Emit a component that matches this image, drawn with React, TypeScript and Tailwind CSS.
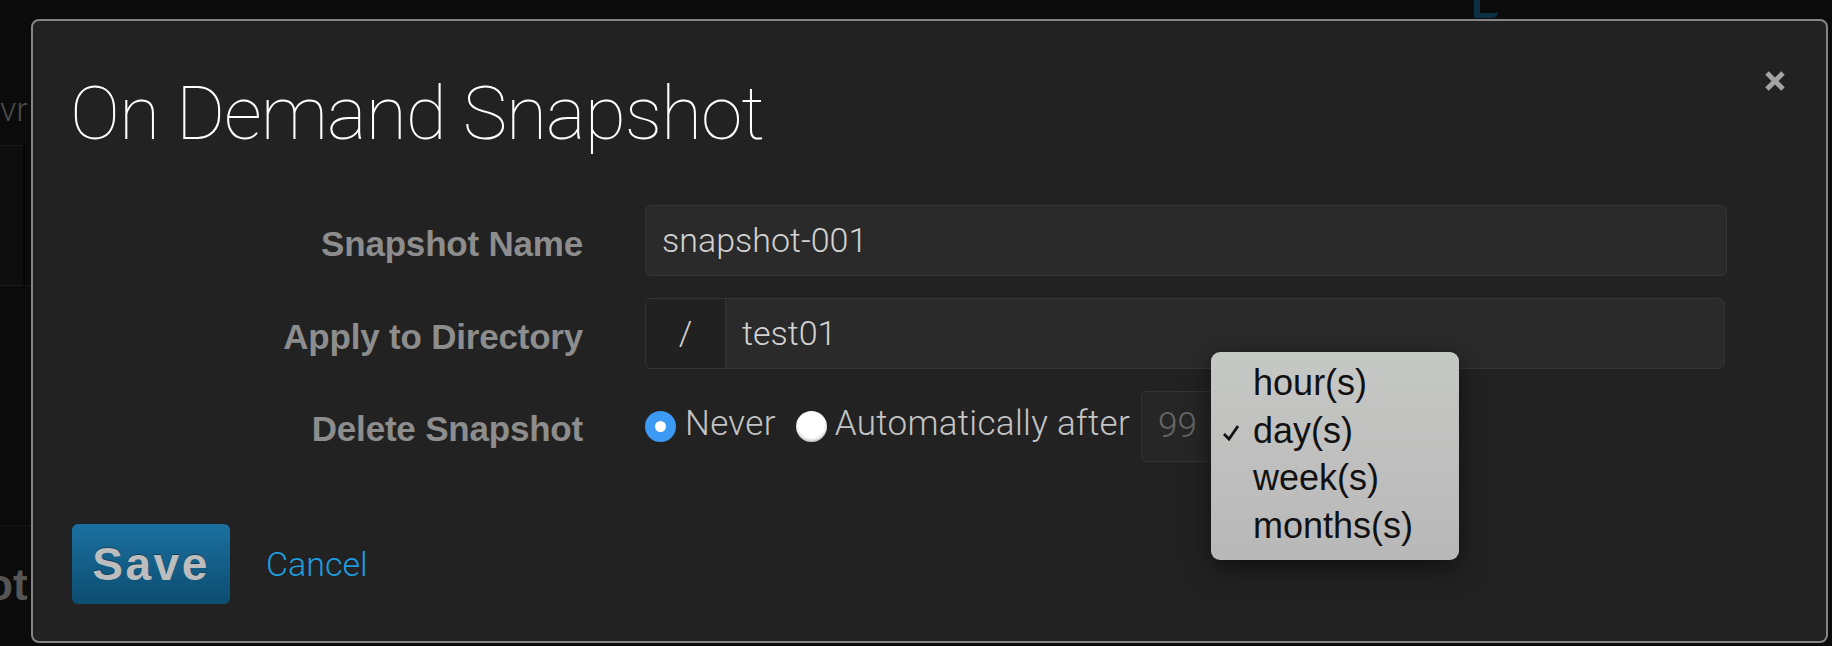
import { useState } from 'react';

const units = ['hour(s)', 'day(s)', 'week(s)', 'months(s)'];

function Radio({ checked }: { checked: boolean }) {
  return checked ? (
    <span className="w-[31px] h-[31px] rounded-full bg-[#3c9af5] flex items-center justify-center shrink-0">
      <span className="block w-[11px] h-[11px] rounded-full bg-white" />
    </span>
  ) : (
    <span className="block w-[31px] h-[31px] rounded-full bg-white shadow-[inset_0_-2px_3px_rgba(0,0,0,0.25)] shrink-0" />
  );
}

export default function App() {
  const [mode] = useState<'never' | 'auto'>('never');
  const [unit] = useState('day(s)');

  return (
    <div className="relative w-[1832px] h-[646px] bg-[#0b0b0b] overflow-hidden font-['Liberation_Sans',Arial,sans-serif]">
      {/* page behind the overlay */}
      <div className="w-[31px] flex flex-col">
        <div className="h-[96px]" />
        <div className="text-[34px] leading-[26px] font-['Roboto',sans-serif] font-light text-[#4a4a4a] whitespace-nowrap overflow-hidden">
          vr
        </div>
        <div className="h-[23px]" />
        <div className="h-[140px] border-t border-[#1a1a1a] border-r-2 border-r-[#050505] bg-[#0e0e0e] w-[25px]" />
        <div className="h-[40px] border-t border-[#1a1a1a]" />
        <div className="h-[200px]" />
        <div className="border-t border-[#161616] h-[40px]" />
        <div className="text-[44px] font-bold text-[#555] leading-[40px] -ml-[14px] whitespace-nowrap">ot</div>
      </div>
      <div className="absolute left-[1474px] top-0 w-[24px] h-[18px] rounded-br-md border-l-[6px] border-b-[5px] border-[#0d2f44]" />

      {/* modal */}
      <div className="absolute left-[31px] top-[19px] w-[1797px] h-[624px] rounded-lg border-2 border-[#858585] bg-[#222222] flex flex-col">
        <div className="flex items-start justify-between pl-[37px] pr-[40px] pt-[52px]">
          <h1 className="font-['Roboto',sans-serif] font-thin text-[75px] leading-[80px] text-white tracking-[-1px]">
            On Demand Snapshot
          </h1>
          <button className="mt-[-3px] w-[22px] h-[22px] text-[#a3a3a3]">
            <svg viewBox="0 0 22 22" className="w-[22px] h-[22px]">
              <path d="M3 3 L19 19 M19 3 L3 19" stroke="currentColor" strokeWidth="5" strokeLinecap="butt" />
            </svg>
          </button>
        </div>

        <div className="mt-[52px] grid grid-cols-[550px_1082px] gap-x-[62px] gap-y-[22px]">
          <label className="h-[71px] pt-[8px] flex items-center justify-end text-[35px] font-bold text-[#8d8d8d] tracking-[-0.2px]">
            Snapshot Name
          </label>
          <div className="h-[71px] rounded-md border border-[#353535] bg-[#2a2a2a] flex items-center px-[16px] font-['Roboto',sans-serif] font-light text-[34px] text-[#d2d2d2]">
            snapshot-001
          </div>

          <label className="h-[71px] pt-[8px] flex items-center justify-end text-[35px] font-bold text-[#8d8d8d] tracking-[-0.2px]">
            Apply to Directory
          </label>
          <div className="h-[71px] w-[1080px] rounded-md border border-[#353535] bg-[#2a2a2a] flex overflow-hidden font-['Roboto',sans-serif] font-light text-[34px] text-[#d2d2d2]">
            <span className="w-[80px] shrink-0 bg-[#212121] border-r border-[#353535] flex items-center justify-center">/</span>
            <span className="flex items-center px-[16px]">test01</span>
          </div>

          <label className="h-[71px] pt-[6px] flex items-center justify-end text-[35px] font-bold text-[#8d8d8d] tracking-[-0.2px]">
            Delete Snapshot
          </label>
          <div className="h-[71px] flex items-center font-['Roboto',sans-serif] font-light text-[35px] tracking-[0.3px] text-[#c4c4c4]">
            <Radio checked={mode === 'never'} />
            <span className="ml-[9px] -mt-[4px]">Never</span>
            <span className="ml-[20px]"><Radio checked={mode === 'auto'} /></span>
            <span className="ml-[8px] -mt-[4px]">Automatically after</span>
            <div className="relative ml-[11px] flex items-center gap-2 tracking-normal">
              <div className="h-[71px] w-[110px] rounded-md border border-[#333] bg-[#262626] flex items-center px-[16px] text-[#676767]">
                99
              </div>
              <div className="h-[71px] w-[200px] rounded-md border border-[#333] bg-[#2a2a2a]" />
              <ul className="absolute left-[70px] top-[-39px] w-[248px] rounded-[9px] bg-gradient-to-b from-[#c6c8c5] to-[#b8b8b8] pt-[7px] pb-[11px] shadow-[0_8px_28px_rgba(0,0,0,0.55)] font-['Liberation_Sans',Arial,sans-serif] font-normal text-[36px] leading-[47.5px] text-[#111]">
                {units.map((u) => (
                  <li key={u} className="relative pl-[42px]">
                    {u === unit && (
                      <svg viewBox="0 0 18 18" className="absolute left-[11px] top-[17px] w-[18px] h-[18px]">
                        <path d="M2 10 L7 15 L16 2" fill="none" stroke="#111" strokeWidth="2.8" />
                      </svg>
                    )}
                    {u}
                  </li>
                ))}
              </ul>
            </div>
          </div>
        </div>

        <div className="mt-[62px] pl-[39px] flex items-center gap-[36px]">
          <button className="w-[158px] h-[80px] rounded-md bg-gradient-to-b from-[#1b70a0] to-[#0c4d70] text-[46px] font-bold text-[#bdbdbd] tracking-[2.5px] [text-shadow:0_-1px_0_rgba(0,0,0,0.35)]">
            Save
          </button>
          <a className="font-['Roboto',sans-serif] font-light text-[34px] text-[#1d9ddf] cursor-pointer">Cancel</a>
        </div>
      </div>
    </div>
  );
}
